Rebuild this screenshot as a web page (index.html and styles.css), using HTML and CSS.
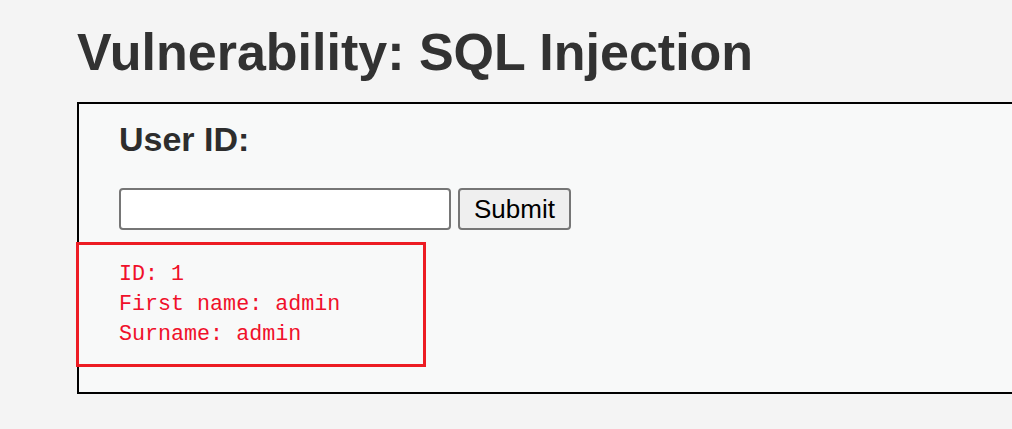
FILE: index.html
```html
<!DOCTYPE html>
<html>
<head>
<meta charset="utf-8">
<title>Vulnerability: SQL Injection</title>
<link rel="stylesheet" href="styles.css">
</head>
<body>
<div class="body-padded">
  <h1 class="page-title">Vulnerability: SQL Injection</h1>
  <div class="vulnerable-code-area">
    <form class="id-form" action="#" method="GET">
      <h3 class="field-label">User ID:</h3>
      <div class="field-row">
        <input class="text-input" type="text" name="id">
        <input class="submit-btn" type="submit" name="Submit" value="Submit">
      </div>
    </form>
    <pre class="result">ID: 1
First name: admin
Surname: admin</pre>
    <div class="highlight-box"></div>
  </div>
</div>
</body>
</html>
```
FILE: styles.css
```css
html, body {
  margin: 0;
  padding: 0;
  overflow: hidden;
}
body {
  background: #f4f4f4;
  font-family: "Liberation Sans", Arial, sans-serif;
  color: #333333;
}
.body-padded {
  padding: 22px 0 0 77px;
}
.page-title {
  margin: 0 0 20px 0;
  font-size: 52px;
  line-height: 60px;
  font-weight: bold;
  color: #323232;
}
.vulnerable-code-area {
  position: relative;
  box-sizing: border-box;
  height: 292px;
  border: 2px solid #000;
  border-right: none;
  background: #f8f9f9;
  padding: 15px 0 0 40px;
}
.id-form {
  margin: 0;
}
.field-label {
  margin: 0;
  font-size: 34px;
  line-height: 40px;
  font-weight: bold;
  color: #2d2d2d;
}
.field-row {
  display: flex;
  gap: 7px;
  margin-top: 29px;
}
.text-input {
  box-sizing: border-box;
  width: 332px;
  height: 42px;
  border: 2px solid #767676;
  border-radius: 4px;
  background: #fff;
  margin: 0;
  padding: 0 4px;
  font-size: 20px;
}
.submit-btn {
  box-sizing: border-box;
  width: 113px;
  height: 42px;
  border: 2px solid #767676;
  border-radius: 4px;
  background: #efefef;
  margin: 0;
  padding: 0;
  font-family: "Liberation Sans", Arial, sans-serif;
  font-size: 26px;
  color: #000;
}
.result {
  margin: 30px 0 0 0;
  font-family: "Liberation Mono", "Courier New", monospace;
  font-size: 21.7px;
  line-height: 30px;
  color: #f0102a;
}
.highlight-box {
  position: absolute;
  left: -3px;
  top: 138px;
  width: 350px;
  height: 125px;
  box-sizing: border-box;
  border: 3px solid #ed1c24;
}
```
